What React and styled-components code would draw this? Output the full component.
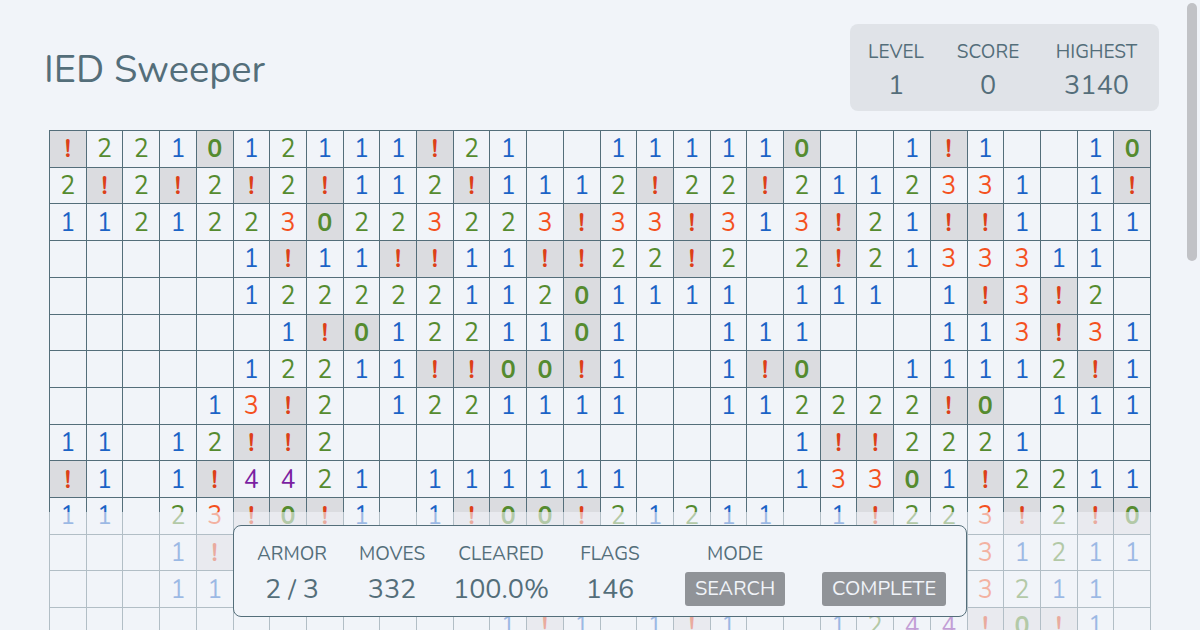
import React from "react";
import styled, { createGlobalStyle } from "styled-components";

const GlobalStyle = createGlobalStyle`
  * {
    box-sizing: border-box;
  }

  body {
    margin: 0;
    background: #f1f4f9;
    color: #546e7a;
    font-family: Nunito, Lato, sans-serif;
  }
`;

const ink = "#546e7a";
const colors = {
  1: "#1b63c6",
  2: "#558b2f",
  3: "#f4511e",
  4: "#7b1fa2",
  0: "#558b2f",
  "!": "#dd4018",
};

const Page = styled.div`
  height: 100vh;
  overflow: hidden;
`;

const Header = styled.header`
  display: flex;
  align-items: flex-start;
  justify-content: space-between;
  padding: 24px 41px 19px 44px;
`;

const Title = styled.h1`
  margin: 21px 0 0;
  font-size: 38px;
  font-weight: 400;
  line-height: 50px;
`;

const ScoreBox = styled.dl`
  display: grid;
  grid-template-columns: 92px 92px 125px;
  margin: 0;
  padding: 15px 0 7px;
  border-radius: 8px;
  background: #e0e3e8;
`;

const Stat = styled.div`
  display: flex;
  flex-direction: column;
  align-items: center;
  gap: ${(p) => p.$gap || 0}px;
`;

const Label = styled.dt`
  font-size: 19px;
  line-height: 26px;
`;

const Value = styled.dd`
  margin: 0;
  font-size: 27px;
  line-height: 36px;
  white-space: nowrap;
`;

const BoardArea = styled.main`
  padding: 0 49px;
`;

const Board = styled.div`
  display: grid;
  grid-template-columns: repeat(30, minmax(0, 1fr));
  border-right: 1px solid ${ink};
  border-bottom: 1px solid ${ink};
`;

const Cell = styled.button`
  display: flex;
  align-items: center;
  justify-content: center;
  aspect-ratio: 1;
  margin: 0;
  padding: 1px 0 0;
  border: 0 solid ${ink};
  border-width: 1px 0 0 1px;
  background: ${(p) => (p.$flagged ? "#dbdce0" : "transparent")};
  color: ${(p) => p.$color};
  font-family: inherit;
  font-size: 25px;
  font-weight: ${(p) => (p.$flagged ? 700 : 400)};
  line-height: 30px;
`;

const Footer = styled.footer`
  position: fixed;
  right: 0;
  bottom: 0;
  left: 0;
  display: flex;
  justify-content: center;
  padding: 13px 0;
  background: rgba(241, 244, 249, 0.6);
`;

const Panel = styled.dl`
  display: grid;
  grid-template-columns: 100px 100px 118px 100px 150px 148px;
  margin: 0;
  padding: 15px 8px 8px;
  border: 1px solid ${ink};
  border-radius: 8px;
  background: #f1f4f9;
`;

const ActionSlot = styled.dd`
  display: flex;
  align-items: flex-end;
  justify-content: center;
  margin: 0;
  padding-bottom: 2px;
`;

const Action = styled.button`
  height: 34px;
  padding: 0 10px;
  border: 0;
  border-radius: 3px;
  background: #909398;
  color: #f1f4f9;
  font-family: inherit;
  font-size: 20px;
  line-height: 28px;
`;

const ScrollThumb = styled.div`
  position: fixed;
  top: 3px;
  right: 3px;
  width: 10px;
  height: 41vh;
  border-radius: 5px;
  background: #c1c2c6;
`;

const rows = [
  "!221012111!21  111110  1!1  10",
  "2!2!2!2!112!1112!22!2112331 1!",
  "11212230223223!33!313!21!!1 11",
  "     1!11!!11!!22!2 2!2133311 ",
  "     12222211201111 111 1!3!2 ",
  "      1!01221101  111   113!31",
  "     12211!!00!1  1!0  11112!1",
  "    13!2 1221111  112222!0 111",
  "11 12!!2            1!!2221   ",
  "!1 1!4421 111111    13301!2211",
  "11 23!0!1 1!00!21211 1!223!2!0",
  "   1!                    31211",
  "   11                    3211 ",
  "            1!1 1!1  1244!0!1 ",
];

const scores = [
  ["LEVEL", "1"],
  ["SCORE", "0"],
  ["HIGHEST", "3140"],
];

const progress = [
  ["ARMOR", "2 / 3"],
  ["MOVES", "332"],
  ["CLEARED", "100.0%"],
  ["FLAGS", "146"],
];

export default function App() {
  return (
    <Page>
      <GlobalStyle />
      <Header>
        <Title>IED Sweeper</Title>
        <ScoreBox>
          {scores.map(([label, value]) => (
            <Stat key={label} $gap={3}>
              <Label>{label}</Label>
              <Value>{value}</Value>
            </Stat>
          ))}
        </ScoreBox>
      </Header>
      <BoardArea>
        <Board>
          {rows.flatMap((row, y) =>
            [...row].map((mark, x) => (
              <Cell
                key={`${y}-${x}`}
                type="button"
                $flagged={mark === "!" || mark === "0"}
                $color={colors[mark]}
              >
                {mark.trim()}
              </Cell>
            ))
          )}
        </Board>
      </BoardArea>
      <Footer>
        <Panel>
          {progress.map(([label, value]) => (
            <Stat key={label} $gap={5}>
              <Label>{label}</Label>
              <Value>{value}</Value>
            </Stat>
          ))}
          <Stat $gap={5}>
            <Label>MODE</Label>
            <ActionSlot>
              <Action type="button">SEARCH</Action>
            </ActionSlot>
          </Stat>
          <ActionSlot>
            <Action type="button">COMPLETE</Action>
          </ActionSlot>
        </Panel>
      </Footer>
      <ScrollThumb />
    </Page>
  );
}
